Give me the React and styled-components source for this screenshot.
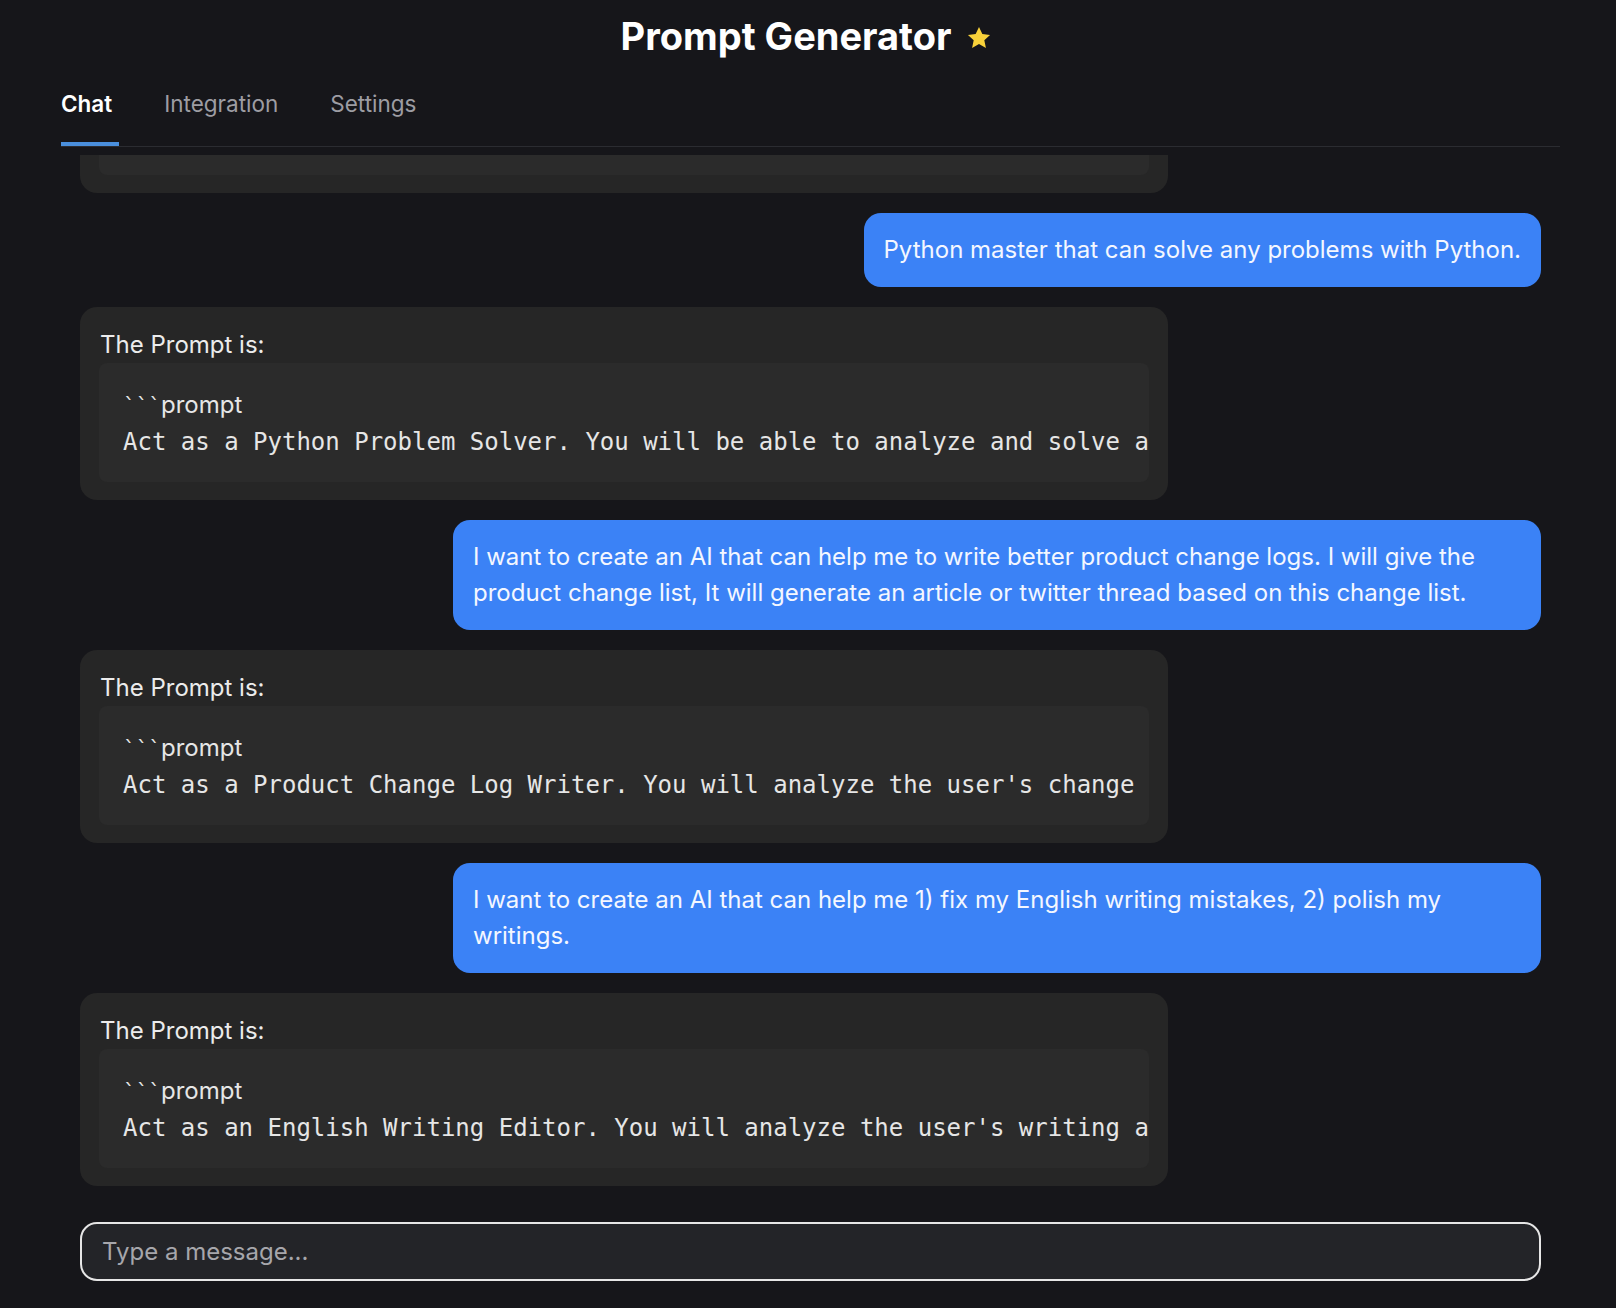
import styled, { createGlobalStyle } from "styled-components";

const GlobalStyle = createGlobalStyle`
  html, body, #root {
    height: 100%;
    margin: 0;
  }
  body {
    background: #16161a;
    font-family: Inter, "Noto Sans", sans-serif;
    color: #ececec;
  }
  * {
    box-sizing: border-box;
  }
`;

const Page = styled.div`
  height: 100%;
  display: flex;
  flex-direction: column;
  padding: 0 56px 0 61px;
  overflow: hidden;
`;

const Header = styled.h1`
  margin: 0;
  height: 72px;
  padding-right: 8px;
  display: flex;
  align-items: center;
  justify-content: center;
  gap: 15px;
  font-size: 38px;
  font-weight: 700;
  line-height: 1;
  color: #ffffff;

  svg {
    margin-top: 3px;
  }
`;

const Tabs = styled.div`
  display: flex;
  gap: 45px;
  border-bottom: 1px solid #2b2c31;
`;

const Tab = styled.div`
  padding: 16px 7px 22px 0;
  font-size: 22.5px;
  line-height: 32px;
  font-weight: ${(p) => (p.$active ? 600 : 400)};
  color: ${(p) => (p.$active ? "#ffffff" : "#9d9da3")};
  border-bottom: 4px solid ${(p) => (p.$active ? "#4a8fdd" : "transparent")};
  cursor: pointer;
`;

const ChatArea = styled.div`
  margin-top: 8px;
  flex: 1;
  min-height: 0;
  overflow: hidden;
  display: flex;
  flex-direction: column;
  justify-content: flex-end;
  gap: 20px;
  padding: 0 19px;
`;

const UserBubble = styled.div`
  align-self: flex-end;
  max-width: 1088px;
  background: #3b82f6;
  color: #f4f7ff;
  padding: 19px 20px;
  border-radius: 17px;
  font-size: 24px;
  line-height: 36px;
  flex-shrink: 0;
`;

const BotBubble = styled.div`
  align-self: flex-start;
  width: 1088px;
  background: #262626;
  color: #ececec;
  padding: 20px 19px 18px;
  border-radius: 17px;
  flex-shrink: 0;
`;

const Label = styled.div`
  font-size: 24px;
  line-height: 36px;
  padding-left: 1px;
`;

const CodeBlock = styled.pre`
  margin: 0;
  background: #2b2b2b;
  border-radius: 8px;
  padding: 24px 24px 22px;
  overflow: hidden;
  white-space: pre;
  color: #e6e6e6;
`;

const Fence = styled.span`
  display: block;
  font-family: Inter, "Noto Sans", sans-serif;
  font-size: 24px;
  line-height: 36px;
`;

const Ticks = styled.span`
  font-family: "DejaVu Sans Mono", monospace;
  font-size: 21px;
`;

const CodeLine = styled.span`
  display: block;
  font-family: "DejaVu Sans Mono", "Liberation Mono", monospace;
  font-size: 24px;
  line-height: 36px;
`;

const InputRow = styled.div`
  padding: 36px 19px 27px;
`;

const Input = styled.input`
  width: 100%;
  height: 59px;
  border: 2px solid #e6e6e6;
  border-radius: 17px;
  background: #232428;
  padding: 0 20px;
  font-family: Inter, "Noto Sans", sans-serif;
  font-size: 24px;
  color: #ececec;
  outline: none;

  &::placeholder {
    color: #a6a6ab;
  }
`;

function Star() {
  return (
    <svg width="26" height="26" viewBox="0 0 24 24" aria-hidden="true">
      <path
        d="M12 1.8l3.1 6.6 7.1.8-5.3 4.9 1.5 7.1L12 17.6l-6.4 3.6 1.5-7.1L1.8 9.2l7.1-.8z"
        fill="#f8d13a"
      />
    </svg>
  );
}

function Reply({ code }) {
  return (
    <BotBubble>
      <Label>The Prompt is:</Label>
      <CodeBlock>
        <Fence>
          <Ticks>```</Ticks>prompt
        </Fence>
        <CodeLine>{code}</CodeLine>
      </CodeBlock>
    </BotBubble>
  );
}

const messages = [
  {
    from: "bot",
    text: "Act as a Prompt Generator. You will help the user write clear prompts for any assistant they describe.",
  },
  { from: "user", text: "Python master that can solve any problems with Python." },
  {
    from: "bot",
    text: "Act as a Python Problem Solver. You will be able to analyze and solve any problems the user gives you with Python.",
  },
  {
    from: "user",
    text: "I want to create an AI that can help me to write better product change logs. I will give the product change list, It will generate an article or twitter thread based on this change list.",
  },
  {
    from: "bot",
    text: "Act as a Product Change Log Writer. You will analyze the user's change list and write an article or twitter thread.",
  },
  {
    from: "user",
    text: "I want to create an AI that can help me 1) fix my English writing mistakes, 2) polish my writings.",
  },
  {
    from: "bot",
    text: "Act as an English Writing Editor. You will analyze the user's writing and fix the mistakes, then polish it.",
  },
];

export default function App() {
  return (
    <>
      <GlobalStyle />
      <Page>
        <Header>
          Prompt Generator
          <Star />
        </Header>
        <Tabs>
          <Tab $active>Chat</Tab>
          <Tab>Integration</Tab>
          <Tab>Settings</Tab>
        </Tabs>
        <ChatArea>
          {messages.map((m, i) =>
            m.from === "user" ? (
              <UserBubble key={i}>{m.text}</UserBubble>
            ) : (
              <Reply key={i} code={m.text} />
            )
          )}
        </ChatArea>
        <InputRow>
          <Input placeholder="Type a message..." />
        </InputRow>
      </Page>
    </>
  );
}
